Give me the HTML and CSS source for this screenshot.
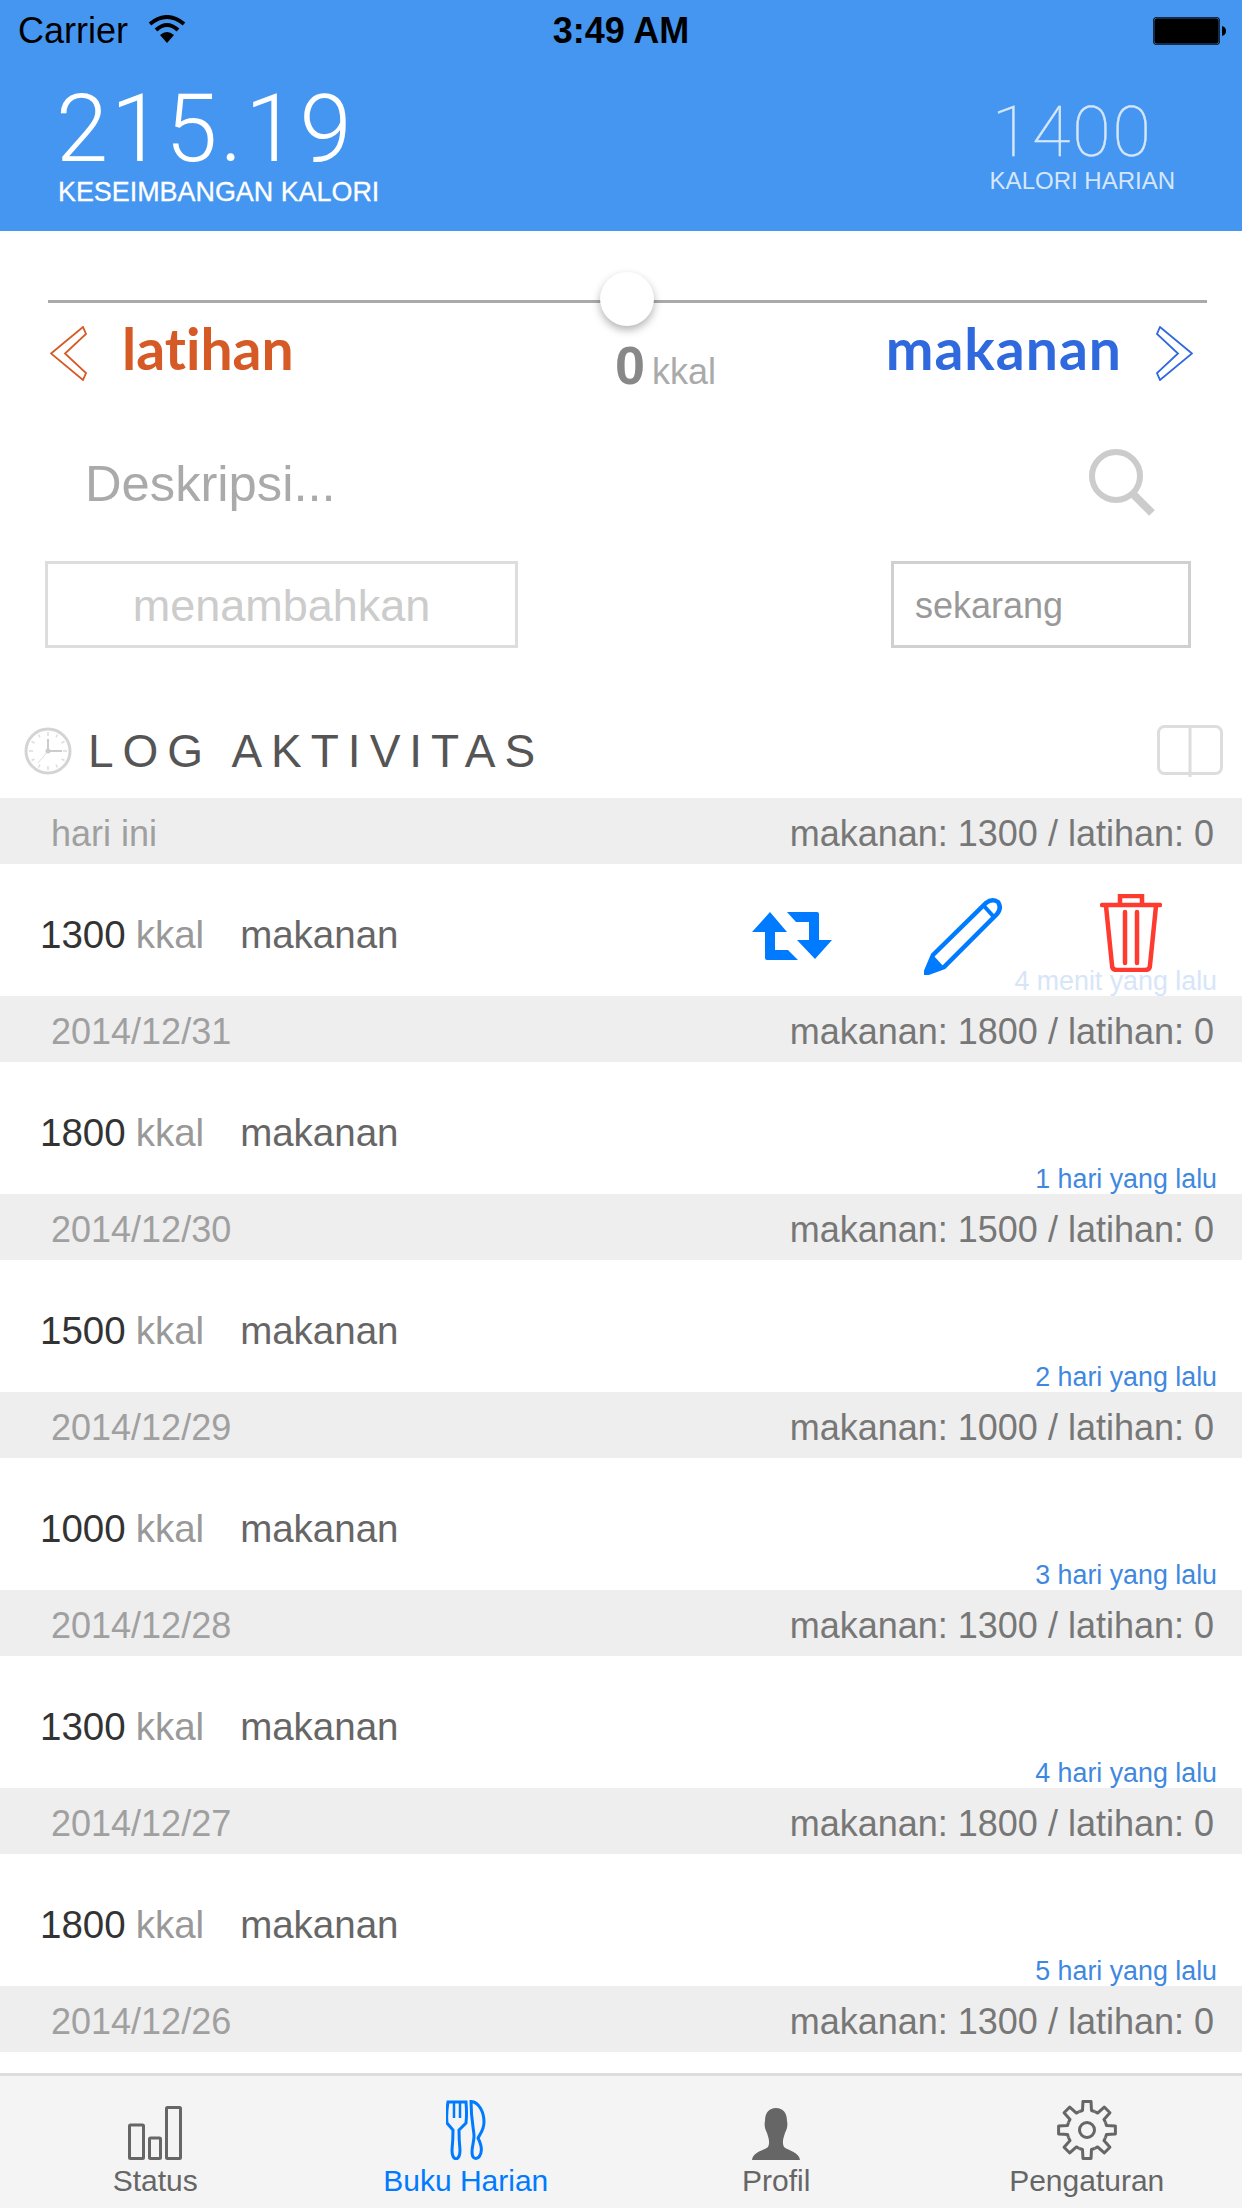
FILE: index.html
```html
<!DOCTYPE html>
<html>
<head>
    <link rel="stylesheet" href="styles.css">
</head>
<body>
    <div class="app">
        <div class="header">
            <div class="status-bar">
                <div class="carrier">
                    <span>Carrier</span>
                    <svg class="wifi" viewBox="0 0 38 28" width="38" height="28">
                        <path d="M2 9 Q19 -5 36 9" fill="none" stroke="#000" stroke-width="4"/>
                        <path d="M8 15 Q19 5 30 15" fill="none" stroke="#000" stroke-width="4"/>
                        <path d="M19 28 L12 20 Q19 14 26 20 Z" fill="#000"/>
                    </svg>
                </div>
                <div class="clock-time">3:49 AM</div>
                <svg class="battery" viewBox="0 0 73 28" width="73" height="28">
                    <rect x="0" y="0" width="67" height="28" rx="4" fill="#000"/>
                    <rect x="1" y="1" width="65" height="26" rx="3" fill="none" stroke="#4596f1" stroke-width="0.6"/>
                    <path d="M69 9 Q73 10 73 14 Q73 18 69 19 Z" fill="#000"/>
                </svg>
            </div>
            <div class="summary">
                <div class="balance">
                    <div class="balance-value">215.19</div>
                    <div class="balance-label">KESEIMBANGAN KALORI</div>
                </div>
                <div class="daily">
                    <div class="daily-value">1400</div>
                    <div class="daily-label">KALORI HARIAN</div>
                </div>
            </div>
        </div>

        <div class="slider">
            <div class="slider-thumb"></div>
        </div>

        <div class="direction">
            <div class="dir-left">
                <svg viewBox="0 0 37 55" width="37" height="55">
                    <path d="M1 27.5 L33 1 L36 8 L15 27.5 L36 47 L33 54 Z" fill="none" stroke="#d65a26" stroke-width="1.8"/>
                </svg>
                <span class="dir-text latihan">latihan</span>
            </div>
            <div class="amount"><b>0</b><span>kkal</span></div>
            <div class="dir-right">
                <span class="dir-text makanan">makanan</span>
                <svg viewBox="0 0 37 55" width="37" height="55">
                    <path d="M36 27.5 L4 1 L1 8 L22 27.5 L1 47 L4 54 Z" fill="none" stroke="#2f69dd" stroke-width="1.8"/>
                </svg>
            </div>
        </div>

        <div class="search">
            <span class="search-placeholder">Deskripsi...</span>
            <svg viewBox="0 0 66 68" width="66" height="68">
                <circle cx="27" cy="27" r="24" fill="none" stroke="#ccc" stroke-width="6"/>
                <path d="M44 45 L63 64" stroke="#ccc" stroke-width="8"/>
            </svg>
        </div>

        <div class="inputs">
            <div class="box box-add">menambahkan</div>
            <div class="box box-now">sekarang</div>
        </div>

        <div class="log-title">
            <svg class="log-clock" viewBox="0 0 48 48" width="48" height="48">
                <circle cx="24" cy="24" r="22" fill="none" stroke="#d4d4d4" stroke-width="3"/>
                <path d="M24 5 V9 M24 39 V43 M5 24 H9 M39 24 H43 M14.5 7.5 L16 10.5 M33.5 7.5 L32 10.5 M14.5 40.5 L16 37.5 M33.5 40.5 L32 37.5 M7.5 14.5 L10.5 16 M40.5 14.5 L37.5 16 M7.5 33.5 L10.5 32 M40.5 33.5 L37.5 32" stroke="#ddd" stroke-width="1.5"/>
                <path d="M24 12 V24 H38" fill="none" stroke="#ccc" stroke-width="2"/>
                <path d="M24 24 L14 36" stroke="#ddd" stroke-width="1"/>
                <circle cx="24" cy="24" r="2.5" fill="#ccc"/>
            </svg>
            <span class="log-text">LOG AKTIVITAS</span>
            <svg class="log-book" viewBox="0 0 66 53" width="66" height="53">
                <rect x="1.5" y="1.5" width="63" height="47" rx="6" fill="none" stroke="#ddd" stroke-width="3"/>
                <path d="M33 1.5 V52" stroke="#ddd" stroke-width="3"/>
            </svg>
        </div>

        <div class="log">
            <div class="day-band"><span class="day-date">hari ini</span><span class="day-total">makanan: 1300 / latihan: 0</span></div>
            <div class="entry">
                <span class="entry-kcal">1300</span><span class="entry-unit">kkal</span><span class="entry-type">makanan</span>
                <div class="entry-actions">
                    <svg class="act-repeat" viewBox="0 0 80 48" width="80" height="48">
                        <path d="M18 0 L35 20 H23 V38 H36 L46 48 H15 Q13 48 13 46 V20 H0 Z" fill="#007aff"/>
                        <path d="M35 0 H65 Q67 0 67 2 V28 H80 L63 47 L45 28 H57 V10 H44 Z" fill="#007aff"/>
                    </svg>
                    <svg class="act-edit" viewBox="0 0 78 78" width="78" height="78">
                        <path d="M1 77 L9 58 L62 6 Q68 1 74 5 Q78 11 73 17 L20 70 Z" fill="none" stroke="#007aff" stroke-width="4.5"/>
                        <path d="M1 77 L9 58 L20 70 Z" fill="#007aff"/>
                        <path d="M60 9 L69 19" stroke="#007aff" stroke-width="4"/>
                    </svg>
                    <svg class="act-delete" viewBox="0 0 62 78" width="62" height="78">
                        <path d="M2 11 H60" stroke="#ff3b30" stroke-width="4.5" stroke-linecap="round"/>
                        <path d="M20 10 V2 H42 V10" fill="none" stroke="#ff3b30" stroke-width="4.5"/>
                        <path d="M6 12 L12 71 Q12 76 17 76 H45 Q50 76 50 71 L56 12" fill="none" stroke="#ff3b30" stroke-width="4.5"/>
                        <path d="M25 18 V69 M37 18 V69" stroke="#ff3b30" stroke-width="4.5" stroke-linecap="round"/>
                    </svg>
                </div>
                <span class="entry-ago entry-ago-faded">4 menit yang lalu</span>
            </div>

            <div class="day-band"><span class="day-date">2014/12/31</span><span class="day-total">makanan: 1800 / latihan: 0</span></div>
            <div class="entry">
                <span class="entry-kcal">1800</span><span class="entry-unit">kkal</span><span class="entry-type">makanan</span>
                <span class="entry-ago">1 hari yang lalu</span>
            </div>

            <div class="day-band"><span class="day-date">2014/12/30</span><span class="day-total">makanan: 1500 / latihan: 0</span></div>
            <div class="entry">
                <span class="entry-kcal">1500</span><span class="entry-unit">kkal</span><span class="entry-type">makanan</span>
                <span class="entry-ago">2 hari yang lalu</span>
            </div>

            <div class="day-band"><span class="day-date">2014/12/29</span><span class="day-total">makanan: 1000 / latihan: 0</span></div>
            <div class="entry">
                <span class="entry-kcal">1000</span><span class="entry-unit">kkal</span><span class="entry-type">makanan</span>
                <span class="entry-ago">3 hari yang lalu</span>
            </div>

            <div class="day-band"><span class="day-date">2014/12/28</span><span class="day-total">makanan: 1300 / latihan: 0</span></div>
            <div class="entry">
                <span class="entry-kcal">1300</span><span class="entry-unit">kkal</span><span class="entry-type">makanan</span>
                <span class="entry-ago">4 hari yang lalu</span>
            </div>

            <div class="day-band"><span class="day-date">2014/12/27</span><span class="day-total">makanan: 1800 / latihan: 0</span></div>
            <div class="entry">
                <span class="entry-kcal">1800</span><span class="entry-unit">kkal</span><span class="entry-type">makanan</span>
                <span class="entry-ago">5 hari yang lalu</span>
            </div>

            <div class="day-band"><span class="day-date">2014/12/26</span><span class="day-total">makanan: 1300 / latihan: 0</span></div>
        </div>

        <div class="tabbar">
            <div class="tab">
                <svg viewBox="0 0 54 54" width="54" height="54">
                    <rect x="1.5" y="19" width="14" height="33.5" rx="1" fill="none" stroke="#666" stroke-width="3"/>
                    <rect x="21.5" y="32" width="11" height="20.5" rx="1" fill="none" stroke="#666" stroke-width="3"/>
                    <rect x="38.5" y="1.5" width="14" height="51" rx="1" fill="none" stroke="#666" stroke-width="3"/>
                </svg>
                <span>Status</span>
            </div>
            <div class="tab tab-active">
                <svg viewBox="0 0 40 60" width="40" height="60">
                    <path d="M2 2 Q0 14 1 23 L7 30 Q7 40 6 50 Q6 58 10 59 Q14 58 14 50 Q13 40 13 30 L20 23 Q21 14 20 2 Z" fill="none" stroke="#007aff" stroke-width="3"/>
                    <path d="M8 2 V18 M14 2 V18" stroke="#007aff" stroke-width="2.5"/>
                    <path d="M25 1.5 C33 2 38 12 38 22 C38 30 34 34 32 38 C36 46 37 52 33 57 C29 60 26 58 26 52 C26 46 28 42 28 36 C28 30 25 20 25 1.5 Z" fill="none" stroke="#007aff" stroke-width="3"/>
                </svg>
                <span>Buku Harian</span>
            </div>
            <div class="tab">
                <svg viewBox="0 0 48 52" width="48" height="52">
                    <path d="M24 0 C31 0 35 5 35 13 C36 17 35 21 33 25 C31 31 30 35 32 39 C37 43 47 44 48 52 H0 C1 44 11 43 16 39 C18 35 17 31 15 25 C13 21 12 17 13 13 C13 5 17 0 24 0 Z" fill="#666"/>
                </svg>
                <span>Profil</span>
            </div>
            <div class="tab">
                <svg viewBox="0 0 60 60" width="60" height="60">
                    <defs>
                        <path id="gearTooth" d="M22.35 11.52 L25.5 10.52 L25.96 1.6 H34.04 L34.5 10.52 L37.65 11.52" fill="none" stroke="#666" stroke-width="3" stroke-linejoin="round"/>
                    </defs>
                    <use href="#gearTooth"/>
                    <use href="#gearTooth" transform="rotate(45 30 30)"/>
                    <use href="#gearTooth" transform="rotate(90 30 30)"/>
                    <use href="#gearTooth" transform="rotate(135 30 30)"/>
                    <use href="#gearTooth" transform="rotate(180 30 30)"/>
                    <use href="#gearTooth" transform="rotate(225 30 30)"/>
                    <use href="#gearTooth" transform="rotate(270 30 30)"/>
                    <use href="#gearTooth" transform="rotate(315 30 30)"/>
                    <circle cx="30" cy="30" r="7.5" fill="none" stroke="#666" stroke-width="3"/>
                </svg>
                <span>Pengaturan</span>
            </div>
        </div>
    </div>
</body>
</html>
```

FILE: styles.css
```css
* {
    box-sizing: border-box;
}

body {
    margin: 0;
    background-color: #ffffff;
    font-family: "Liberation Sans", Arial, sans-serif;
}

.app {
    width: 1242px;
    height: 2208px;
    display: flex;
    flex-direction: column;
    overflow: hidden;
}

/* header */
.header {
    height: 231px;
    flex-shrink: 0;
    background-color: #4596f1;
    color: #ffffff;
}

.status-bar {
    display: grid;
    grid-template-columns: 1fr auto 1fr;
    align-items: center;
    height: 62px;
    padding: 0 16px 0 18px;
    color: #000000;
    font-size: 36px;
}

.carrier {
    display: flex;
    align-items: center;
    gap: 20px;
}

.wifi {
    margin-top: -4px;
}

.clock-time {
    font-weight: bold;
    margin-right: 2px;
}

.battery {
    justify-self: end;
}

.summary {
    display: flex;
    justify-content: space-between;
    padding: 0 67px 0 56px;
}

.balance-value {
    font-family: Roboto, sans-serif;
    font-weight: 300;
    font-size: 94px;
    letter-spacing: 2.5px;
    line-height: 94px;
    margin-top: 20px;
}

.balance-label {
    margin-top: 1px;
    margin-left: 2px;
    font-size: 26.9px;
    line-height: 30px;
    -webkit-text-stroke: 0.3px #ffffff;
}

.daily {
    display: flex;
    flex-direction: column;
    align-items: center;
    color: #d6e6fb;
}

.daily-value {
    margin-top: 35px;
    margin-right: 20px;
    font-family: Roboto, sans-serif;
    font-weight: 100;
    font-size: 70px;
    letter-spacing: 2px;
    line-height: 70px;
    -webkit-text-stroke: 0.4px #d6e6fb;
}

.daily-label {
    font-size: 24px;
    line-height: 28px;
}

/* slider */
.slider {
    position: relative;
    height: 3px;
    margin: 69px 35px 0 48px;
    background-color: #aaaaaa;
}

.slider-thumb {
    position: absolute;
    left: 552px;
    top: -28px;
    width: 54px;
    height: 54px;
    border-radius: 50%;
    background-color: #ffffff;
    box-shadow: 0 4px 8px rgba(0, 0, 0, 0.3);
}

/* latihan / makanan */
.direction {
    display: grid;
    grid-template-columns: 565px 1fr auto;
    height: 146px;
    padding: 23px 49px 0 50px;
}

.dir-left,
.dir-right {
    display: flex;
    align-items: center;
    height: 55px;
}

.dir-left {
    gap: 35px;
}

.dir-right {
    gap: 34px;
    grid-column: 3;
}

.dir-text {
    margin-bottom: 10px;
    font-family: Lato, sans-serif;
    font-weight: 700;
    font-size: 57px;
    font-variant-ligatures: none;
    line-height: 55px;
}

.latihan {
    color: #d65a26;
}

.makanan {
    color: #2f69dd;
    letter-spacing: 1px;
}

.amount {
    margin-top: 9px;
    line-height: 60px;
    color: #aaaaaa;
    font-size: 36px;
}

.amount b {
    font-size: 54px;
    color: #888888;
    margin-right: 7px;
}

/* search and inputs */
.search {
    display: flex;
    justify-content: space-between;
    align-items: center;
    height: 68px;
    padding: 0 87px 0 85px;
    margin-bottom: 44px;
    color: #aaaaaa;
    font-size: 50.7px;
}

.inputs {
    display: flex;
    justify-content: space-between;
    padding: 0 51px 0 45px;
}

.box {
    height: 87px;
    border: 3px solid #dddddd;
    line-height: 83px;
}

.box-add {
    width: 473px;
    text-align: center;
    font-size: 45px;
    color: #cccccc;
}

.box-now {
    width: 300px;
    padding-left: 21px;
    border-color: #d0d0d0;
    font-size: 36px;
    color: #999999;
}

/* log */
.log-title {
    display: flex;
    align-items: center;
    height: 150px;
    padding: 56px 19px 0 24px;
}

.log-text {
    margin-left: 16px;
    font-size: 46px;
    letter-spacing: 9px;
    color: #555555;
}

.log-book {
    margin-left: auto;
}

.log {
    flex: 1;
    overflow: hidden;
}

.day-band {
    display: flex;
    justify-content: space-between;
    align-items: center;
    height: 66px;
    padding: 5px 28px 0 51px;
    background-color: #eeeeee;
    font-size: 36px;
}

.day-date {
    color: #a0a0a0;
}

.day-total {
    color: #777777;
}

.entry {
    position: relative;
    display: flex;
    align-items: center;
    height: 132px;
    padding: 10px 0 0 40px;
    font-size: 38.5px;
}

.entry-kcal {
    color: #333333;
}

.entry-unit {
    margin-left: 10px;
    color: #999999;
}

.entry-type {
    margin-left: 36px;
    color: #666666;
}

.entry-ago {
    position: absolute;
    right: 25px;
    bottom: -1px;
    font-size: 26.8px;
    line-height: 32px;
    color: #3f88e0;
}

.entry-ago-faded {
    color: #d7e5f9;
}

.entry-actions {
    position: absolute;
    top: 30px;
    left: 752px;
    display: flex;
    align-items: flex-start;
}

.act-repeat {
    margin-top: 18px;
    margin-right: 92px;
}

.act-edit {
    margin-top: 3px;
    margin-right: 98px;
}

/* tab bar */
.tabbar {
    display: grid;
    grid-template-columns: repeat(4, 1fr);
    height: 135px;
    flex-shrink: 0;
    border-top: 3px solid #dddddd;
    background-color: #f4f4f4;
}

.tab {
    display: flex;
    flex-direction: column;
    align-items: center;
    justify-content: flex-end;
    padding-bottom: 9px;
    color: #666666;
    font-size: 30px;
    line-height: 36px;
}

.tab svg {
    margin-bottom: 3px;
}

.tab-active {
    color: #007aff;
}
```
